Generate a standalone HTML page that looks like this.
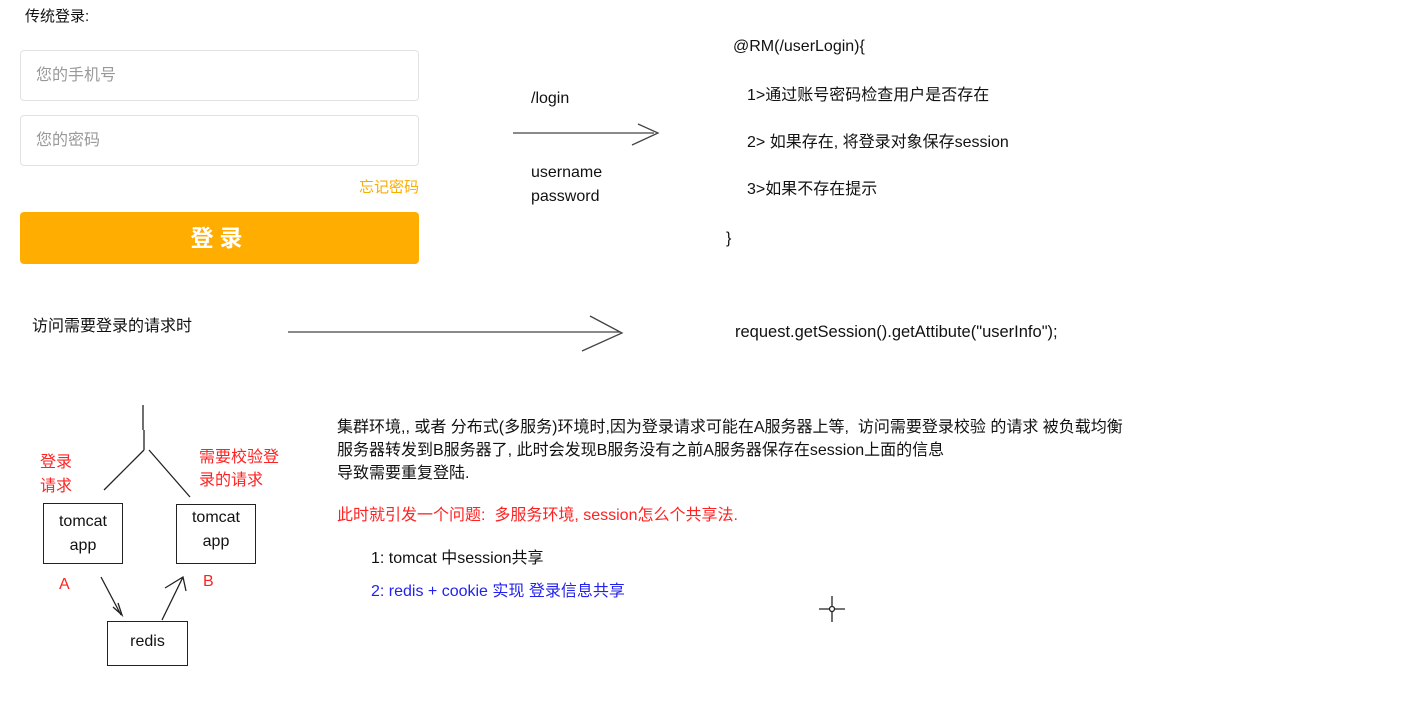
<!DOCTYPE html>
<html><head><meta charset="utf-8"><style>
body{margin:0;width:1401px;height:719px;background:#fff;position:relative;overflow:hidden;font-family:"Liberation Sans","Noto Sans CJK SC",sans-serif;font-size:16px;color:#111}
.a{position:absolute;white-space:nowrap;line-height:18px}
.inp{position:absolute;left:20px;width:399px;height:51px;border:1px solid #e2e2e2;border-radius:4px;box-sizing:border-box;color:#999;font-size:16px;line-height:49px;padding-left:15px}
.box{position:absolute;border:1.5px solid #222;box-sizing:border-box;text-align:center;font-size:16px;line-height:24px}
.r{color:#f22}
</style></head><body>
<div class="a" style="left:25px;top:8px;font-size:15px">传统登录:</div>
<div class="inp" style="top:50px">您的手机号</div>
<div class="inp" style="top:115px">您的密码</div>
<div class="a" style="left:359px;top:179px;color:#fbac00;font-size:15px">忘记密码</div>
<div style="position:absolute;left:20px;top:212px;width:399px;height:52px;background:#ffad00;border-radius:4px;color:#fff;font-weight:bold;font-size:23px;text-align:center;line-height:52px;letter-spacing:6px">登录</div>

<div class="a" style="left:531px;top:90px;font-size:16px">/login</div>
<div class="a" style="left:531px;top:161px;font-size:16px;line-height:24px">username<br>password</div>
<div class="a" style="left:733px;top:38px;font-size:16px">@RM(/userLogin){</div>
<div class="a" style="left:747px;top:87px">1&gt;通过账号密码检查用户是否存在</div>
<div class="a" style="left:747px;top:134px">2&gt; 如果存在, 将登录对象保存session</div>
<div class="a" style="left:747px;top:181px">3&gt;如果不存在提示</div>
<div class="a" style="left:726px;top:230px">}</div>
<div class="a" style="left:32px;top:318px">访问需要登录的请求时</div>
<div class="a" style="left:735px;top:323px;font-size:16.5px">request.getSession().getAttibute("userInfo");</div>

<svg style="position:absolute;left:0;top:0" width="1401" height="719">
<g stroke="#444" stroke-width="1.3" fill="none">
<path d="M513 133H654M638 124L658 133L632 145"/>
<path d="M288 332H620M590 316L622 333L582 351"/>
</g>
<g stroke="#222" stroke-width="1.3" fill="none">
<path d="M143 405V430M144 430V450M144 450L104 490M149 450L190 497"/>
<path d="M101 577L121 615M113 607L122 615L118 603"/>
<path d="M162 620L183 577M165 588L183 577L186 591"/>
<path d="M819 609H845M832 596V622"/>
<circle cx="832" cy="609" r="2.5" fill="#fff"/>
</g>
</svg>
<div class="a r" style="left:40px;top:451px;line-height:24px">登录<br>请求</div>
<div class="a r" style="left:199px;top:446px;line-height:23px">需要校验登<br>录的请求</div>
<div class="box" style="left:43px;top:503px;width:80px;height:61px;padding-top:6px">tomcat<br>app</div>
<div class="box" style="left:176px;top:504px;width:80px;height:60px;padding-top:1px">tomcat<br>app</div>
<div class="a r" style="left:59px;top:576px;font-size:16px">A</div>
<div class="a r" style="left:203px;top:573px;font-size:16px">B</div>
<div class="box" style="left:107px;top:621px;width:81px;height:45px;line-height:40px">redis</div>

<div class="a" style="left:337px;top:416px;line-height:23px">集群环境,, 或者 分布式(多服务)环境时,因为登录请求可能在A服务器上等,&nbsp; 访问需要登录校验 的请求 被负载均衡<br>服务器转发到B服务器了, 此时会发现B服务没有之前A服务器保存在session上面的信息<br>导致需要重复登陆.</div>
<div class="a r" style="left:337px;top:507px">此时就引发一个问题:&nbsp; 多服务环境, session怎么个共享法.</div>
<div class="a" style="left:371px;top:550px">1: tomcat 中session共享</div>
<div class="a" style="left:371px;top:583px;color:#22e">2: redis + cookie 实现 登录信息共享</div>
</body></html>
